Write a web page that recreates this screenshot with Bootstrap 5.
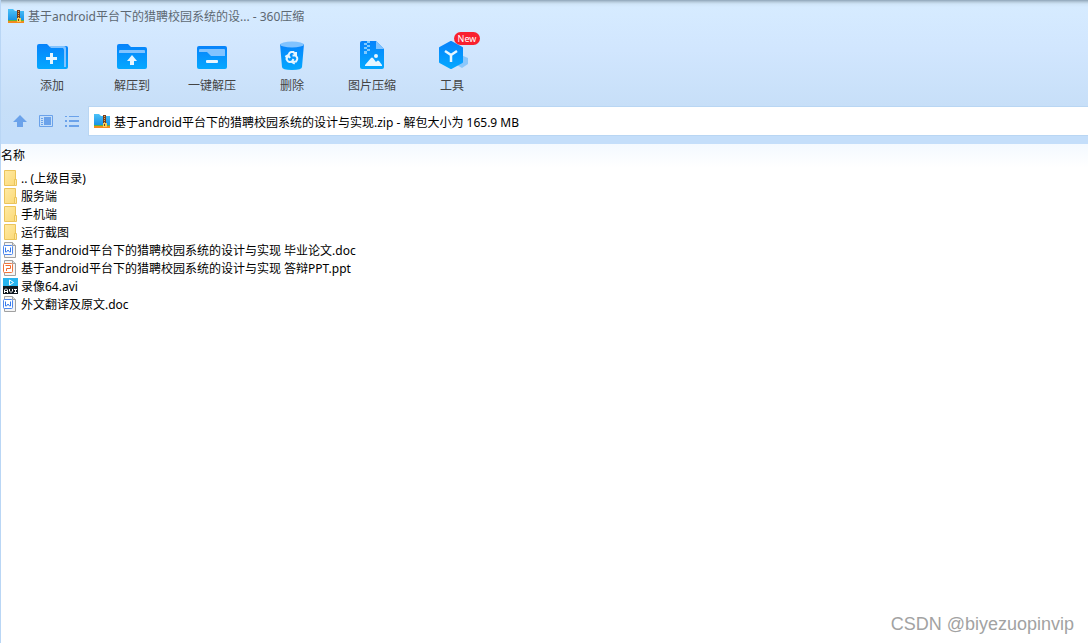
<!DOCTYPE html>
<html lang="zh-CN">
<head>
<meta charset="utf-8">
<meta name="viewport" content="width=device-width, initial-scale=1">
<title>360压缩</title>
<link href="https://cdn.jsdelivr.net/npm/bootstrap@5.3.0/dist/css/bootstrap.min.css" rel="stylesheet">
<style>
  body { font-family: "Noto Sans", "Noto Sans CJK SC", sans-serif; font-size: 12px; line-height: 18px; color: #000; background: #fff; }
  .window { border-left: 1px solid #b9d6f5; }
  .chrome { background: linear-gradient(#8fa5b8 0, #b7cbdc 2px, #cfe4f7 4px, #d6ebff 7px, #d1e6fe 50px, #c7dff8 106px, #c4defa 136px, #c4defa); }
  .title-bar { height: 32px; padding-left: 7px; gap: 4px; color: #5d6872; }
  .title-bar h1 { font-size: 12px; line-height: 18px; font-weight: 400; padding-top: 2px; }
  .tool-bar { padding: 6px 11px 0; height: 74px; }
  .tool { width: 80px; padding: 0; border: 0; background: none; color: #444; line-height: 18px; }
  .tool svg { display: block; margin: 0 auto 5px; }
  .new-tag { left: 42px; top: -6px; width: 26px; height: 13px; border-radius: 7px; background: #f9202e; color: #fff; font-size: 9px; line-height: 13px; }
  .path-bar { height: 38px; padding-bottom: 8px; }
  .nav-tools { padding-left: 11px; width: 87px; gap: 10px; }
  .nav-tools button { border: 0; padding: 0; background: none; line-height: 0; }
  .address { height: 30px; border: solid #b9d6f3; border-width: 1px 0 1px 1px; background: #fff; padding-left: 5px; gap: 4px; }
  .address input { border: 0; outline: 0; padding: 2px 0 0; height: 20px; color: #000; background: none; }
  .files { width: 100%; border-collapse: collapse; }
  .files th { height: 24px; padding: 0; font-weight: 400; background: linear-gradient(#f3f9ff, #fff); }
  .files td { height: 18px; padding: 0 0 0 1px; }
  .files tbody tr:first-child td { height: 19px; padding-top: 1px; }
  .files a { color: #000; text-decoration: none; gap: 3px; height: 18px; }
  .files a span { padding-top: 2px; }
  .watermark { right: 14px; bottom: 8px; font-family: "Liberation Sans", sans-serif; font-size: 18px; line-height: 22px; color: #a2a2a2; }
</style>
</head>
<body>
<svg width="0" height="0" class="position-absolute" aria-hidden="true">
  <defs>
    <linearGradient id="blue" x1="0" y1="0" x2="0" y2="1"><stop stop-color="#0783fb"/><stop offset="1" stop-color="#04a8ff"/></linearGradient>
    <linearGradient id="sky" x1="0" y1="0" x2="0" y2="1"><stop stop-color="#4cc2f8"/><stop offset="1" stop-color="#1a93e6"/></linearGradient>
    <linearGradient id="sand" x1="0" y1="0" x2="1" y2="1"><stop stop-color="#ffeaa3"/><stop offset="1" stop-color="#fbd977"/></linearGradient>
    <symbol id="zip" viewBox="0 0 16 14"><path fill="url(#sky)" d="M0 0h5l2 2h9v9H0z"/><path fill="#5fb63a" d="M0 11h16v1H0z"/><path fill="#f48a1d" d="M0 12h16v2H0z"/><path fill="#743d20" d="M9 1h3v12H9z"/><path stroke="#e9ad4b" stroke-dasharray="1 1" d="M10.500 2v7"/><path fill="#f8cf55" d="M9 9h4v4H9z"/><path fill="#743d20" d="M10 10h1v2h-1z"/></symbol>
    <symbol id="folder" viewBox="0 0 16 18"><path fill="url(#sand)" stroke="#ebc45b" d="M2.500 1.500h11v15h-11z"/><path fill="#ffe8a0" stroke="#ebc45b" d="M12.500 10.500h2v6h-2z"/></symbol>
    <symbol id="page" viewBox="0 0 16 18"><path fill="#f5f5f5" stroke="#a1a1a1" d="M2.500 1.500h8l3 3v12h-11z"/><path fill="#ddd" stroke="#a1a1a1" d="M10.500 1.500v3h3"/></symbol>
    <symbol id="doc" viewBox="0 0 16 18"><use href="#page"/><rect x="1.500" y="4.500" width="9" height="9" rx="1" fill="#fff" stroke="#4d87ee"/><path fill="none" stroke="#3479eb" d="M3.500 6.500v4.500h1l1.500-2 1.500 2h1V6.500"/></symbol>
    <symbol id="ppt" viewBox="0 0 16 18"><use href="#page"/><rect x="1.500" y="4.500" width="9" height="9" rx="1" fill="#fff" stroke="#f1743b"/><path fill="none" stroke="#f06a2f" d="M3.500 6.500h5v3h-4V12"/></symbol>
    <symbol id="avi" viewBox="0 0 16 18"><path fill="#27b4ef" d="M1 1h15v9H1z"/><path fill="none" stroke="#fff" d="M7.500 3v5l4-2.500z"/><path fill="#111820" d="M1 9h15v8H1z"/><path fill="none" stroke="#fff" d="M2.500 16v-3l1-1h1l1 1v3m-3-1.500h3M7.500 12v2l1.500 1.500 1.500-1.500v-2M12 12.500h3m-1.500 0v3m-1.500 0h3"/></symbol>
  </defs>
</svg>

<div class="window min-vh-100 overflow-hidden position-relative">
  <header class="chrome">
    <div class="title-bar d-flex align-items-center">
      <svg width="16" height="14"><use href="#zip"/></svg>
      <h1 class="m-0">基于android平台下的猎聘校园系统的设... - 360压缩</h1>
    </div>

    <nav class="tool-bar d-flex align-items-start" aria-label="工具栏">
      <button type="button" class="tool"><svg width="32" height="34" viewBox="0 0 32 34"><path fill="url(#blue)" d="M14 8h16q2 0 2 2v19q0 2-2 2H14z"/><path fill="#81c3ff" d="M14 8h14q2 0 2 2v19h-3V10H14z"/><path fill="url(#blue)" d="M3 6h8l4 4h11q2 0 2 2v19H3q-2 0-2-2V8q0-2 2-2z"/><path fill="#e7f6ff" d="M14 15h3v4h4v3h-4v4h-3v-4h-4v-3h4z"/></svg>添加</button>
      <button type="button" class="tool"><svg width="32" height="34" viewBox="0 0 32 34"><path fill="url(#blue)" d="M3 6h9l3 3h14q2 0 2 2v18q0 2-2 2H3q-2 0-2-2V8q0-2 2-2z"/><path fill="#81c3ff" d="M3 15v-2q0-1 1-1h24q1 0 1 1v2z"/><path fill="#e7f6ff" d="M16 17l5 6h-3v4h-4v-4h-3z"/></svg>解压到</button>
      <button type="button" class="tool"><svg width="32" height="34" viewBox="0 0 32 34"><rect x="1" y="8" width="30" height="23" rx="2" fill="url(#blue)"/><path fill="#81c3ff" d="M3 14v-2q0-1 1-1h24q1 0 1 1v6H15l-4-4z"/><rect x="10" y="22" width="12" height="3" rx="1" fill="#e7f6ff"/></svg>一键解压</button>
      <button type="button" class="tool"><svg width="32" height="34" viewBox="0 0 32 34"><path fill="url(#blue)" d="M4 6h24l-2 23q0 3-10 3T6 29z"/><ellipse cx="16" cy="6.500" rx="12" ry="3" fill="#81c3ff"/><g fill="none" stroke="#e7f6ff" stroke-width="2"><path id="arm" d="M12.500 17l1-2q1-1 2-1h2l2 3m.5-3v3.500h-3.500"/><use href="#arm" transform="rotate(120 16 19.500)"/><use href="#arm" transform="rotate(240 16 19.500)"/></g></svg>删除</button>
      <button type="button" class="tool"><svg width="32" height="34" viewBox="0 0 32 34"><path fill="url(#blue)" d="M6 3h14l8 8v18q0 2-2 2H6q-2 0-2-2V5q0-2 2-2z"/><path fill="#81c3ff" d="M20 3l8 8h-8z"/><path fill="#7fcaff" d="M8 5h3v2H8zM11 3h3v2h-3zM11 7h3v2h-3zM8 9h3v2H8zM11 11h3v2h-3zM8 13h3v3H8z"/><circle cx="20" cy="18" r="2" fill="#e7f6ff"/><path fill="#e7f6ff" d="M9 27l6-7q1-1 2 0l3 4 1-1q1-1 2 0l3 4v1H9z"/></svg>图片压缩</button>
      <button type="button" class="tool position-relative"><svg width="32" height="34" viewBox="0 0 32 34"><path fill="#8bc7fb" d="M25 17l7 3v6l-6 4-7-4z"/><path fill="url(#blue)" stroke="url(#blue)" stroke-width="2" stroke-linejoin="round" d="M15 4l11 6v14l-11 6-11-6V10z"/><path fill="none" stroke="#e7f6ff" stroke-width="2.500" d="M9 13l6 4 6-4m-6 4v7"/></svg>工具<span class="new-tag position-absolute">New</span></button>
    </nav>

    <div class="path-bar d-flex align-items-center">
      <div class="nav-tools d-flex align-items-center flex-shrink-0">
        <button type="button" aria-label="上级目录"><svg width="16" height="16"><path fill="#6ba2ea" d="M8 2l7 7h-4v5H5V9H1z"/></svg></button>
        <button type="button" aria-label="预览"><svg width="16" height="16"><path fill="none" stroke="#6ba2ea" d="M1.500 2.500h13v11h-13z"/><path fill="#6ba2ea" d="M6 4h7v8H6zM3 5h2v1H3zM3 7h2v1H3zM3 9h2v1H3zM3 11h2v1H3z"/></svg></button>
        <button type="button" aria-label="列表"><svg width="16" height="16"><path fill="#6ba2ea" d="M1 3h2v1H1zM5 3h10v1H5zM1 7h2v2H1zM5 7h10v2H5zM1 12h2v2H1zM5 12h10v2H5z"/></svg></button>
      </div>
      <div class="address d-flex align-items-center flex-grow-1">
        <svg width="16" height="14" class="flex-shrink-0"><use href="#zip"/></svg>
        <input class="flex-grow-1" type="text" aria-label="路径" value="基于android平台下的猎聘校园系统的设计与实现.zip - 解包大小为 165.9 MB">
      </div>
    </div>
  </header>

  <main>
    <table class="files">
      <thead><tr><th scope="col">名称</th></tr></thead>
      <tbody>
        <tr><td><a href="#" class="d-flex align-items-center"><svg width="16" height="18"><use href="#folder"/></svg><span>.. (上级目录)</span></a></td></tr>
        <tr><td><a href="#" class="d-flex align-items-center"><svg width="16" height="18"><use href="#folder"/></svg><span>服务端</span></a></td></tr>
        <tr><td><a href="#" class="d-flex align-items-center"><svg width="16" height="18"><use href="#folder"/></svg><span>手机端</span></a></td></tr>
        <tr><td><a href="#" class="d-flex align-items-center"><svg width="16" height="18"><use href="#folder"/></svg><span>运行截图</span></a></td></tr>
        <tr><td><a href="#" class="d-flex align-items-center"><svg width="16" height="18"><use href="#doc"/></svg><span>基于android平台下的猎聘校园系统的设计与实现 毕业论文.doc</span></a></td></tr>
        <tr><td><a href="#" class="d-flex align-items-center"><svg width="16" height="18"><use href="#ppt"/></svg><span>基于android平台下的猎聘校园系统的设计与实现 答辩PPT.ppt</span></a></td></tr>
        <tr><td><a href="#" class="d-flex align-items-center"><svg width="16" height="18"><use href="#avi"/></svg><span>录像64.avi</span></a></td></tr>
        <tr><td><a href="#" class="d-flex align-items-center"><svg width="16" height="18"><use href="#doc"/></svg><span>外文翻译及原文.doc</span></a></td></tr>
      </tbody>
    </table>
  </main>
  <div class="watermark position-absolute">CSDN @biyezuopinvip</div>
</div>
<script src="https://cdn.jsdelivr.net/npm/bootstrap@5.3.0/dist/js/bootstrap.bundle.min.js"></script>
</body>
</html>
